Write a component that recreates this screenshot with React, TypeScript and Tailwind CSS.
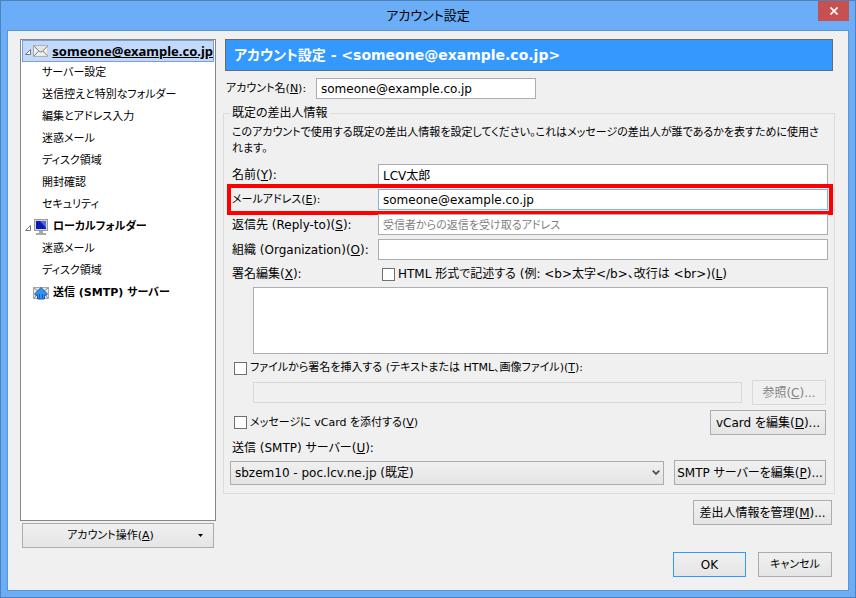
import type { ButtonHTMLAttributes, ReactNode } from "react";
import clsx from "clsx";

type TreeItem = {
  label: string;
  icon?: "mail" | "computer" | "smtp";
  expanded?: boolean;
  selected?: boolean;
};

const treeItems: TreeItem[] = [
  { label: "someone@example.co.jp", icon: "mail", expanded: true, selected: true },
  { label: "サーバー設定" },
  { label: "送信控えと特別なフォルダー" },
  { label: "編集とアドレス入力" },
  { label: "迷惑メール" },
  { label: "ディスク領域" },
  { label: "開封確認" },
  { label: "セキュリティ" },
  { label: "ローカルフォルダー", icon: "computer", expanded: true },
  { label: "迷惑メール" },
  { label: "ディスク領域" },
  { label: "送信 (SMTP) サーバー", icon: "smtp" },
];

function MailIcon() {
  return (
    <svg width="16" height="16" viewBox="0 0 16 16" aria-hidden="true">
      <rect x="0.5" y="2.5" width="15" height="11" fill="#f0f0f0" stroke="#a8a8a8" />
      <path d="M1 13 6 8M15 13l-5-5" stroke="#777" fill="none" />
      <path d="M1 3l5.500 5.500q1.500 1 3 0L15 3" stroke="#777" fill="#e6e6e6" />
    </svg>
  );
}

function ComputerIcon() {
  return (
    <svg width="16" height="16" viewBox="0 0 16 16" aria-hidden="true">
      <rect x="1.5" y="0.5" width="13" height="11" fill="#d8d8d8" stroke="#9a9a9a" />
      <rect x="3" y="2" width="10" height="8" fill="#0a1cb4" />
      <path d="M7 2h6v7z" fill="#4a6ae8" />
      <path d="M6 12h4v2h3v2H3v-2h3z" fill="#a8a8a8" />
    </svg>
  );
}

function SmtpIcon() {
  return (
    <svg width="16" height="16" viewBox="0 0 16 16" aria-hidden="true">
      <rect x="0.5" y="2.5" width="15" height="11" fill="#e8e8e8" stroke="#a8a8a8" />
      <path d="M1 13l4-4M15 13l-4-4M1 3l4 3M15 3l-4 3" stroke="#8a8a8a" />
      <path
        d="M8 2.500 14 8.500V10h-2.500v4h-7v-4H2V8.500z"
        fill="#2f93f0"
        stroke="#1a5cac"
      />
      <path d="M6.500 14V9M9.500 14V9" stroke="#1a5cac" />
    </svg>
  );
}

const icons = { mail: MailIcon, computer: ComputerIcon, smtp: SmtpIcon };

function Twisty() {
  return (
    <svg width="6" height="6" viewBox="0 0 6 6" aria-hidden="true">
      <path d="M5.500 0.500v5h-5z" fill="#fff" stroke="#777" />
    </svg>
  );
}

function AccountTree() {
  return (
    <ul className="flex-1 border border-[#828790] bg-white px-px text-[11px]">
      {treeItems.map((item, i) => {
        const Icon = item.icon && icons[item.icon];

        return (
          <li
            key={i}
            className={clsx(
              "flex h-[22px] items-center whitespace-nowrap border",
              item.selected ? "border-[#7a9fd0] bg-[#c2d9fb]" : "border-transparent",
              Icon ? "font-bold" : "pl-[19px]",
            )}
          >
            {Icon && (
              <>
                <span className="flex h-4 w-[10px] items-end justify-center pb-1">
                  {item.expanded && <Twisty />}
                </span>
                <Icon />
                <span
                  className={clsx(
                    "pl-1",
                    item.selected && "font-['Noto_Sans',sans-serif] text-[13px] underline",
                  )}
                >
                  {item.label}
                </span>
              </>
            )}
            {!Icon && item.label}
          </li>
        );
      })}
    </ul>
  );
}

function PushButton({
  className,
  children,
  ...props
}: ButtonHTMLAttributes<HTMLButtonElement>) {
  return (
    <button
      type="button"
      className={clsx(
        "h-[25px] shrink-0 whitespace-nowrap border bg-linear-to-b from-[#f0f0f0] to-[#e5e5e5] disabled:border-[#d9d9d9] disabled:bg-none disabled:text-[#838383]",
        className ?? "border-[#acacac]",
      )}
      {...props}
    >
      {children}
    </button>
  );
}

function Field({
  id,
  label,
  accessKey,
  value,
  placeholder,
  highlighted,
  smallLabel,
}: {
  id: string;
  label: string;
  accessKey: string;
  value?: string;
  placeholder?: string;
  highlighted?: boolean;
  smallLabel?: boolean;
}) {
  return (
    <div className="relative flex items-center">
      <label
        htmlFor={id}
        className={clsx(
          "w-[148px] shrink-0 whitespace-nowrap pl-0.5",
          smallLabel && "text-[11px]",
        )}
      >
        {label}(<u>{accessKey}</u>):
      </label>
      <input
        id={id}
        type="text"
        defaultValue={value}
        placeholder={placeholder}
        className={clsx(
          "h-[21px] min-w-0 flex-1 border bg-white px-1 placeholder:text-[11px] placeholder:text-[#7f7f7f]",
          highlighted ? "border-[#7eb4ea]" : "border-[#abadb3]",
        )}
      />
      {highlighted && (
        <div className="pointer-events-none absolute -inset-y-[5px] -left-[3px] -right-[5px] border-4 border-[#ff0000]" />
      )}
    </div>
  );
}

function Check({ id, children }: { id: string; children: ReactNode }) {
  return (
    <div className="flex items-center gap-[3px] whitespace-nowrap">
      <input
        id={id}
        type="checkbox"
        className="size-[13px] shrink-0 appearance-none border border-[#707070] bg-white checked:bg-[#3399ff]"
      />
      <label htmlFor={id}>{children}</label>
    </div>
  );
}

export default function App() {
  return (
    <div className="flex min-h-screen flex-col border border-[#4f82bd] bg-[#6badf6] font-['DejaVu_Sans','Noto_Sans_CJK_JP',sans-serif] text-[12px] leading-4 text-black [font-feature-settings:'palt']">
      <header className="grid h-[29px] grid-cols-[1fr_auto_1fr]">
        <h1 className="col-start-2 self-center text-[13px]">アカウント設定</h1>
        <button
          type="button"
          aria-label="閉じる"
          className="mr-1.5 flex h-5 w-[31px] items-center justify-center justify-self-end bg-[#c75050]"
        >
          <svg width="8" height="8" viewBox="0 0 8 8" aria-hidden="true">
            <path d="M0.500 0.500l7 7M7.500 0.500l-7 7" stroke="#fff" strokeWidth="1.700" />
          </svg>
        </button>
      </header>

      <main className="mx-1.5 mb-1.5 flex flex-1 flex-col border border-[#5b93d4] bg-[#f0f0f0] pt-2 pb-[13px] pl-3 pr-[13px]">
        <div className="flex gap-[7px]">
          <nav className="flex w-[196px] shrink-0 flex-col">
            <AccountTree />
            <div className="flex flex-col px-0.5 pt-0.5 text-[11px]">
              <PushButton>
                <span className="flex items-center pr-2.5">
                  <span className="flex-1">
                    アカウント操作(<u>A</u>)
                  </span>
                  <svg width="5" height="3" viewBox="0 0 5 3" aria-hidden="true">
                    <path d="M0 0h5L2.500 3z" />
                  </svg>
                </span>
              </PushButton>
            </div>
          </nav>

          <div className="flex min-w-0 flex-1 flex-col">
            <h2 className="mx-0.5 flex h-8 items-center border border-[#696969] bg-[#3399ff] px-2 text-[14px] font-bold text-white">
              アカウント設定 - &lt;someone@example.co.jp&gt;
            </h2>

            <div className="mt-[7px] flex items-center gap-2 pl-[3px]">
              <label htmlFor="account" className="w-[82px] whitespace-nowrap text-[11px]">
                アカウント名(<u>N</u>):
              </label>
              <input
                id="account"
                type="text"
                defaultValue="someone@example.co.jp"
                className="h-[21px] w-[220px] border border-[#abadb3] bg-white px-1"
              />
            </div>

            <fieldset className="mt-1.5 min-w-0 border border-[#dcdcdc] px-1.5 pt-1 pb-2">
              <legend className="px-0.5">既定の差出人情報</legend>
              <p className="mb-[7px] px-0.5 text-[11px]">
                このアカウントで使用する既定の差出人情報を設定してください。これはメッセージの差出人が誰であるかを表すために使用されます。
              </p>

              <div className="flex flex-col gap-1">
                <Field id="name" label="名前" accessKey="Y" value="LCV太郎" />
                <Field
                  id="email"
                  label="メールアドレス"
                  accessKey="E"
                  value="someone@example.co.jp"
                  highlighted
                  smallLabel
                />
                <Field
                  id="reply-to"
                  label="返信先 (Reply-to)"
                  accessKey="S"
                  placeholder="受信者からの返信を受け取るアドレス"
                />
                <Field id="organization" label="組織 (Organization)" accessKey="O" />
              </div>

              <div className="mt-1.5 flex items-center">
                <label htmlFor="signature" className="w-[152px] pl-0.5">
                  署名編集(<u>X</u>):
                </label>
                <Check id="html">
                  HTML 形式で記述する (例: &lt;b&gt;太字&lt;/b&gt;、改行は &lt;br&gt;)(<u>L</u>)
                </Check>
              </div>
              <div className="mt-[5px] flex pl-[23px]">
                <textarea
                  id="signature"
                  className="h-[67px] flex-1 resize-none border border-[#abadb3] bg-white px-1"
                />
              </div>

              <div className="mt-1.5 pl-1 text-[11px]">
                <Check id="attach-file">
                  ファイルから署名を挿入する (テキストまたは HTML、画像ファイル)(<u>T</u>):
                </Check>
              </div>
              <div className="mt-1 flex items-center gap-2.5 pl-[23px] pr-0.5">
                <input
                  type="text"
                  disabled
                  aria-label="署名ファイル"
                  className="h-[21px] min-w-0 flex-1 border border-[#d9d9d9] bg-[#f0f0f0]"
                />
                <div className="flex w-[74px] flex-col">
                  <PushButton disabled>
                    参照(<u>C</u>)...
                  </PushButton>
                </div>
              </div>

              <div className="mt-[5px] flex items-center justify-between pl-1 pr-0.5">
                <div className="text-[11px]">
                  <Check id="vcard">
                    メッセージに vCard を添付する(<u>V</u>)
                  </Check>
                </div>
                <div className="flex w-[116px] flex-col">
                  <PushButton>
                    vCard を編集(<u>D</u>)...
                  </PushButton>
                </div>
              </div>

              <label htmlFor="smtp" className="mt-[5px] block pl-0.5">
                送信 (SMTP) サーバー(<u>U</u>):
              </label>
              <div className="mt-1 flex items-center gap-2.5 pr-0.5">
                <div className="relative flex min-w-0 flex-1">
                  <select
                    id="smtp"
                    className="h-6 flex-1 appearance-none border border-[#acacac] bg-linear-to-b from-[#f0f0f0] to-[#e5e5e5] px-1"
                  >
                    <option>sbzem10 - poc.lcv.ne.jp (既定)</option>
                  </select>
                  <svg
                    className="pointer-events-none absolute right-1 top-[9px]"
                    width="8"
                    height="6"
                    viewBox="0 0 8 6"
                    aria-hidden="true"
                  >
                    <path d="M0.700 0.700 4 4l3.300-3.300" fill="none" stroke="#555" strokeWidth="1.900" />
                  </svg>
                </div>
                <div className="flex w-[152px] flex-col">
                  <PushButton>
                    SMTP サーバーを編集(<u>P</u>)...
                  </PushButton>
                </div>
              </div>
            </fieldset>

            <div className="mt-1.5 mb-[23px] flex justify-end pr-[3px]">
              <div className="flex w-[139px] flex-col">
                <PushButton>
                  差出人情報を管理(<u>M</u>)...
                </PushButton>
              </div>
            </div>
          </div>
        </div>

        <footer className="mt-1 flex justify-end gap-3 pr-[3px]">
          <div className="flex w-[73px] flex-col">
            <PushButton className="border-[#3399ff]">OK</PushButton>
          </div>
          <div className="flex w-[74px] flex-col text-[11px]">
            <PushButton>キャンセル</PushButton>
          </div>
        </footer>
      </main>
    </div>
  );
}
